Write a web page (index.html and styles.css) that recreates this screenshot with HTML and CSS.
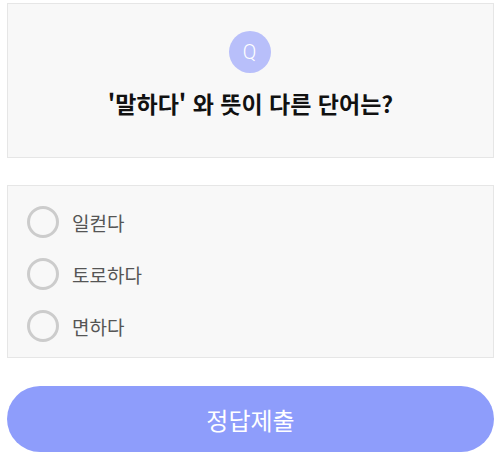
FILE: index.html
```html
<!DOCTYPE html>
<html lang="ko">
<head>
<meta charset="utf-8">
<link rel="stylesheet" href="styles.css">
</head>
<body>
<div class="page">
  <section class="question">
    <div class="q-badge">Q</div>
    <h1 class="q-title">'말하다' 와 뜻이 다른 단어는?</h1>
  </section>
  <section class="options">
    <label class="option"><span class="radio"></span><span class="opt-text">일컫다</span></label>
    <label class="option"><span class="radio"></span><span class="opt-text">토로하다</span></label>
    <label class="option"><span class="radio"></span><span class="opt-text">면하다</span></label>
  </section>
  <button class="submit">정답제출</button>
</div>
</body>
</html>
```

FILE: styles.css
```css
html, body {
  margin: 0;
  padding: 0;
  background: #ffffff;
}
body {
  font-family: "Noto Sans CJK KR", "Noto Sans", sans-serif;
}
.page {
  width: 487px;
  padding: 3px 0 0 7px;
  display: flex;
  flex-direction: column;
}
.question {
  box-sizing: border-box;
  height: 155px;
  background: #f8f8f8;
  border: 1px solid #e6e6e6;
  display: flex;
  flex-direction: column;
  align-items: center;
  padding-top: 27px;
}
.q-badge {
  width: 42px;
  height: 42px;
  border-radius: 50%;
  background: #b8bffa;
  color: #ffffff;
  font-family: "Roboto", sans-serif;
  font-weight: 300;
  font-size: 20px;
  margin-right: 2px;
  display: flex;
  align-items: center;
  justify-content: center;
}
.q-title {
  margin: 14px 0 0;
  font-size: 23px;
  line-height: 32px;
  font-weight: 700;
  color: #111111;
  letter-spacing: 0;
}
.options {
  box-sizing: border-box;
  margin-top: 27px;
  height: 173px;
  background: #f8f8f8;
  border: 1px solid #e6e6e6;
  padding: 20px 19px 0;
  display: flex;
  flex-direction: column;
  gap: 20px;
}
.option {
  display: flex;
  align-items: center;
  gap: 13px;
  height: 32px;
}
.radio {
  box-sizing: border-box;
  width: 32px;
  height: 32px;
  border-radius: 50%;
  border: 3px solid #cccccc;
  background: #f8f8f8;
}
.opt-text {
  font-size: 19px;
  color: #555555;
}
.submit {
  margin-top: 28px;
  height: 66px;
  border: none;
  border-radius: 33px;
  background: #8e9dfb;
  color: #ffffff;
  font-family: "Noto Sans CJK KR", sans-serif;
  font-size: 24px;
  padding: 0;
}
```
